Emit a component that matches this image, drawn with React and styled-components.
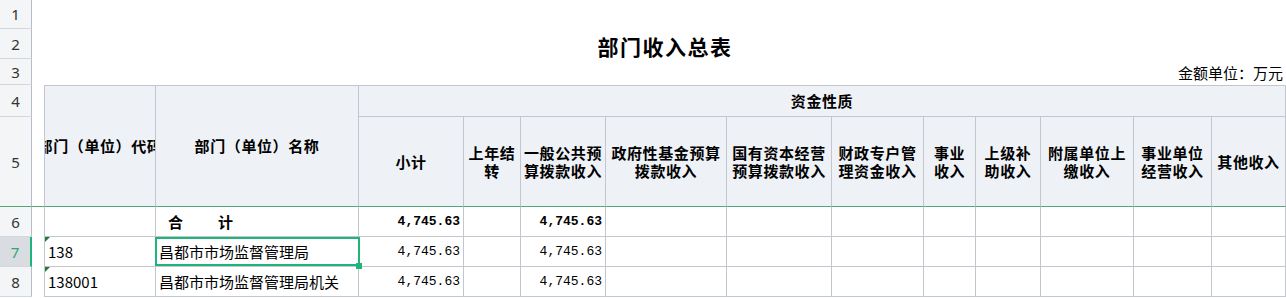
import styled, { createGlobalStyle } from 'styled-components';

const Global = createGlobalStyle`
  html, body { margin: 0; padding: 0; background: #fff; }
  body { font-family: "Noto Sans CJK SC", "Noto Sans", sans-serif; }
  * { box-sizing: border-box; }
`;

const GRID = '#c3c6cc';
const FREEZE = '#52a878';
const PICK = '#1fb57a';

const Sheet = styled.div`
  display: grid;
  grid-template-columns: 32px 12px 112px 203px 105px 57px 85px 121px 105px 92px 52px 65px 93px 78px 74px;
  grid-template-rows: 29px 30px 26px 32px 90px 30px 30px 30px;
  width: 1286px;
  height: 298px;
  overflow: hidden;
  background: #fff;
`;

const RowNum = styled.div`
  display: flex;
  align-items: center;
  justify-content: center;
  font-family: "Noto Sans", "Open Sans", sans-serif;
  font-size: 15px;
  color: ${p => (p.$active ? '#2aa876' : '#333')};
  background: ${p => (p.$active ? '#d9dce1' : '#f4f5f7')};
  border-bottom: 1px solid ${p => (p.$freeze ? FREEZE : '#d3d7de')};
  border-right: ${p => (p.$active ? `2px solid ${PICK}` : '1px solid #b7bdc8')};
`;

const Blank = styled.div`
  grid-column: span ${p => p.$span || 1};
  border-bottom: ${p => (p.$freeze ? `1px solid ${FREEZE}` : 'none')};
`;

const Title = styled.div`
  grid-column: span 13;
  display: flex;
  align-items: center;
  justify-content: center;
  padding-top: 4px;
  font-size: 21px;
  font-weight: 700;
  letter-spacing: 1.5px;
  color: #000;
`;

const Unit = styled.div`
  grid-column: span 13;
  display: flex;
  align-items: center;
  justify-content: flex-end;
  padding-right: 3px;
  font-size: 15px;
  color: #000;
`;

const Head = styled.div`
  grid-column: span ${p => p.$span || 1};
  grid-row: span ${p => p.$rows || 1};
  display: flex;
  align-items: center;
  justify-content: center;
  overflow: hidden;
  white-space: nowrap;
  text-align: center;
  background: #eef1f6;
  font-size: 15px;
  font-weight: 700;
  letter-spacing: 0.6px;
  line-height: 18px;
  color: #000;
  border-right: 1px solid ${GRID};
  border-top: ${p => (p.$top ? `1px solid ${GRID}` : 'none')};
  border-left: ${p => (p.$left ? `1px solid ${GRID}` : 'none')};
  border-bottom: 1px solid ${p => (p.$group ? GRID : FREEZE)};
`;

const Cell = styled.div`
  position: relative;
  display: flex;
  align-items: center;
  justify-content: ${p => (p.$num ? 'flex-end' : 'flex-start')};
  padding: 0 3px;
  white-space: nowrap;
  overflow: ${p => (p.$selected ? 'visible' : 'hidden')};
  z-index: ${p => (p.$selected ? 2 : 'auto')};
  font-family: ${p => (p.$num ? '"Liberation Mono", "DejaVu Sans Mono", monospace' : '"Noto Sans CJK SC", "Noto Sans", sans-serif')};
  font-size: ${p => (p.$num ? '13px' : '15px')};
  font-weight: ${p => (p.$bold ? 700 : 400)};
  color: #000;
  border-right: 1px solid ${GRID};
  border-bottom: 1px solid ${GRID};
  border-left: ${p => (p.$left ? `1px solid ${GRID}` : 'none')};

  ${p => p.$marked && `
    &::before {
      content: '';
      position: absolute;
      top: 0;
      left: 0;
      border-top: 5px solid #1c7d3a;
      border-right: 5px solid transparent;
    }
  `}

  ${p => p.$selected && `
    &::after {
      content: '';
      position: absolute;
      top: 0;
      left: -1px;
      right: -2px;
      bottom: 0;
      border: 2px solid ${PICK};
      pointer-events: none;
    }
    &::before {
      content: '';
      position: absolute;
      right: -4px;
      bottom: -3px;
      width: 6px;
      height: 6px;
      background: ${PICK};
      z-index: 3;
    }
  `}
`;

const TotalLabel = styled.span`
  padding-left: 9px;
  font-weight: 700;
  letter-spacing: 35px;
`;

const subHeads = [
  ['小计'],
  ['上年结', '转'],
  ['一般公共预', '算拨款收入'],
  ['政府性基金预算', '拨款收入'],
  ['国有资本经营', '预算拨款收入'],
  ['财政专户管', '理资金收入'],
  ['事业', '收入'],
  ['上级补', '助收入'],
  ['附属单位上', '缴收入'],
  ['事业单位', '经营收入'],
  ['其他收入'],
];

const rows = [
  { n: 7, code: '138', name: '昌都市市场监督管理局', total: '4,745.63', general: '4,745.63', active: true },
  { n: 8, code: '138001', name: '昌都市市场监督管理局机关', total: '4,745.63', general: '4,745.63' },
];

const Empties = ({ count }) =>
  Array.from({ length: count }, (_, i) => <Cell key={i} />);

export default function App() {
  return (
    <>
      <Global />
      <Sheet>
        <RowNum>1</RowNum>
        <Blank $span={14} />

        <RowNum>2</RowNum>
        <Blank />
        <Title>部门收入总表</Title>

        <RowNum>3</RowNum>
        <Blank />
        <Unit>金额单位：万元</Unit>

        <RowNum>4</RowNum>
        <Blank />
        <Head $rows={2} $top $left>部门（单位）代码</Head>
        <Head $rows={2} $top>部门（单位）名称</Head>
        <Head $span={11} $top $group>资金性质</Head>

        <RowNum $freeze>5</RowNum>
        <Blank $freeze />
        {subHeads.map((lines, i) => (
          <Head key={i}>
            <div>
              {lines.map((l, j) => (
                <div key={j}>{l}</div>
              ))}
            </div>
          </Head>
        ))}

        <RowNum>6</RowNum>
        <Blank />
        <Cell $left />
        <Cell>
          <TotalLabel>合计</TotalLabel>
        </Cell>
        <Cell $num $bold>4,745.63</Cell>
        <Cell />
        <Cell $num $bold>4,745.63</Cell>
        <Empties count={8} />

        {rows.map(r => (
          <RowGroup key={r.n} row={r} />
        ))}
      </Sheet>
    </>
  );
}

function RowGroup({ row }) {
  return (
    <>
      <RowNum $active={row.active}>{row.n}</RowNum>
      <Blank />
      <Cell $left $marked>{row.code}</Cell>
      <Cell $selected={row.active}>{row.name}</Cell>
      <Cell $num>{row.total}</Cell>
      <Cell />
      <Cell $num>{row.general}</Cell>
      <Empties count={8} />
    </>
  );
}
